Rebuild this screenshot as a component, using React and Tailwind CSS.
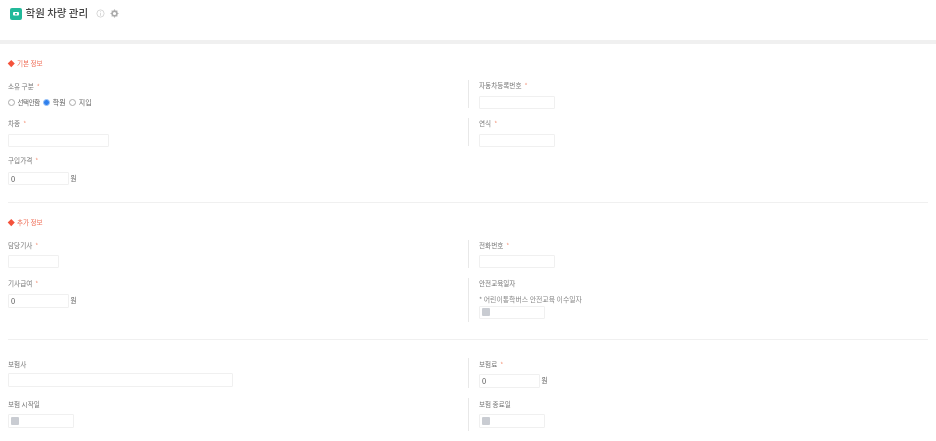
const font = { fontFamily: '"Noto Sans CJK KR", "Noto Sans", sans-serif' };

function Label({ text, required }) {
  return (
    <div className="h-[11px] flex items-center text-[6.6px] leading-none text-[#777]">
      {text}
      {required && <span className="ml-[3px] text-[#f59a80]">*</span>}
    </div>
  );
}

function TextBox({ className, value }) {
  return (
    <div className={`h-[13.5px] bg-white border border-[#f0f0f0] rounded-[1px] flex items-center px-[2px] text-[7.5px] text-[#555] ${className}`}>
      {value}
    </div>
  );
}

function MoneyBox({ className }) {
  return (
    <div className="flex items-center">
      <TextBox className={className} value="0" />
      <span className="ml-[2px] mt-[1px] text-[6.6px] text-[#666]">원</span>
    </div>
  );
}

function DateBox() {
  return (
    <div className="w-[66px] h-[13.5px] bg-white border border-[#f0f0f0] rounded-[1px] flex items-center pl-[1.5px]">
      <div className="w-[8px] h-[8px] bg-[#c9ccd2] rounded-[1px]" />
    </div>
  );
}

function Radio({ checked, text, textClass }) {
  return (
    <label className="flex items-center gap-[2.5px] mr-[3.5px]">
      <span
        className={`w-[7px] h-[7px] shrink-0 rounded-full ${
          checked ? "bg-[#2f80ed] border border-[#9cc4f7]" : "bg-white border border-[#aaa]"
        }`}
      />
      <span className={`leading-none text-[#666] ${textClass}`}>{text}</span>
    </label>
  );
}

function Heading({ text }) {
  return (
    <div className="flex items-center h-[10px] pl-[1px] gap-[3.4px] text-[6.6px] leading-none text-[#f0705a]">
      <span className="w-[4.5px] h-[4.5px] rotate-45 bg-[#f4523b]" />
      <span>{text}</span>
    </div>
  );
}

function Row({ left, right, h, className = "" }) {
  return (
    <div className={`flex ${h} ${className}`}>
      <div className="w-[460px] shrink-0">{left}</div>
      <div className="flex-1 border-l border-[#e8e8e8] pl-[10px]">{right}</div>
    </div>
  );
}

export default function App() {
  return (
    <div className="w-[936px] h-[441px] overflow-hidden bg-white blur-[0.6px]" style={font}>
      <header className="h-[40px] flex items-start pl-[9.5px] pt-[6px]">
        <div className="w-[12.5px] h-[12.5px] mt-[1.5px] rounded-[2px] bg-[#22b99a] flex items-center justify-center">
          <svg width="8" height="6" viewBox="0 0 8 6">
            <rect x="1" y="1" width="6" height="3.5" rx="1" fill="#fff" />
            <rect x="3" y="2" width="2" height="1.5" fill="#22b99a" />
          </svg>
        </div>
        <h1 className="ml-[3.5px] text-[10.5px] leading-[14px] font-medium text-[#444]">학원 차량 관리</h1>
        <svg className="ml-[8px] mt-[3px]" width="9" height="9" viewBox="0 0 10 10" fill="none" stroke="#c8c8c8" strokeWidth="0.8">
          <circle cx="5" cy="5" r="4" />
          <path d="M5 4.5v3M5 2.6v1" />
        </svg>
        <svg className="ml-[5px] mt-[3px]" width="9" height="9" viewBox="0 0 10 10" fill="none" stroke="#aaa">
          <circle cx="5" cy="5" r="2.7" strokeWidth="1.8" />
          <path d="M5 .6v1.4M5 8v1.4M.6 5H2M8 5h1.4M1.9 1.9l1 1M7.1 7.1l1 1M8.1 1.9l-1 1M2.9 7.1l-1 1" strokeWidth="1.2" />
        </svg>
      </header>
      <div className="h-[4px] bg-[#f0f0f0]" />

      <main className="px-[8px]">
        <div className="pt-[14px]">
          <Heading text="기본 정보" />
        </div>

        <Row
          h="h-[28px]"
          className="mt-[12px]"
          left={
            <div className="pt-[1px]">
              <Label text="소유 구분" required />
              <div className="flex items-center h-[10px] mt-[5px]">
                <Radio text="선택안함" textClass="text-[6.5px] tracking-[-0.4px]" />
                <Radio text="학원" textClass="text-[7px]" checked />
                <Radio text="지입" textClass="text-[7px]" />
              </div>
            </div>
          }
          right={
            <div>
              <Label text="자동차등록번호" required />
              <TextBox className="w-[76px] mt-[4.5px]" />
            </div>
          }
        />

        <Row
          h="h-[28px]"
          className="mt-[10px]"
          left={
            <div>
              <Label text="차종" required />
              <TextBox className="w-[101px] mt-[4.5px]" />
            </div>
          }
          right={
            <div>
              <Label text="연식" required />
              <TextBox className="w-[76px] mt-[4.5px]" />
            </div>
          }
        />

        <div className="mt-[9px]">
          <Label text="구입가격" required />
          <div className="mt-[5.5px]">
            <MoneyBox className="w-[60.5px]" />
          </div>
        </div>

        <hr className="mt-[17px] border-[#f0f0f0]" />

        <div className="pt-[14px]">
          <Heading text="추가 정보" />
        </div>

        <Row
          h="h-[28px]"
          className="mt-[13px]"
          left={
            <div>
              <Label text="담당기사" required />
              <TextBox className="w-[51px] mt-[3.5px]" />
            </div>
          }
          right={
            <div>
              <Label text="전화번호" required />
              <TextBox className="w-[76px] mt-[3.5px]" />
            </div>
          }
        />

        <Row
          h="h-[44px]"
          className="mt-[10px]"
          left={
            <div>
              <Label text="기사급여" required />
              <div className="mt-[5px]">
                <MoneyBox className="w-[60.5px]" />
              </div>
            </div>
          }
          right={
            <div>
              <Label text="안전교육일자" />
              <div className="mt-[5px] h-[10px] flex items-center text-[6.9px] leading-none text-[#888]">
                * 어린이통학버스 안전교육 이수일자
              </div>
              <div className="mt-[1.5px]">
                <DateBox />
              </div>
            </div>
          }
        />

        <hr className="mt-[17px] border-[#f0f0f0]" />

        <Row
          h="h-[30px]"
          className="mt-[18px]"
          left={
            <div className="pt-[1px]">
              <Label text="보험사" />
              <TextBox className="w-[225px] mt-[3px]" />
            </div>
          }
          right={
            <div className="pt-[0.5px]">
              <Label text="보험료" required />
              <div className="mt-[4.5px]">
                <MoneyBox className="w-[60.5px]" />
              </div>
            </div>
          }
        />

        <Row
          h="h-[33px]"
          className="mt-[10px]"
          left={
            <div className="pt-[1px]">
              <Label text="보험 시작일" />
              <div className="mt-[4px]">
                <DateBox />
              </div>
            </div>
          }
          right={
            <div className="pt-[1px]">
              <Label text="보험 종료일" />
              <div className="mt-[4px]">
                <DateBox />
              </div>
            </div>
          }
        />
      </main>
    </div>
  );
}
